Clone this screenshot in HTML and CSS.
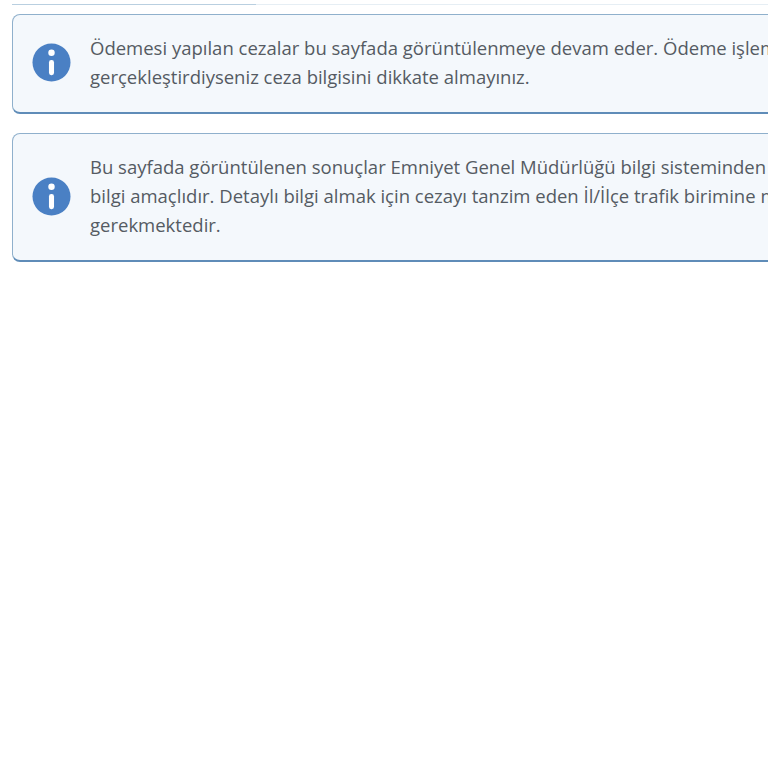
FILE: index.html
```html
<!DOCTYPE html>
<html lang="tr">
<head>
<meta charset="utf-8">
<title>Trafik Cezası</title>
<link rel="stylesheet" href="styles.css">
</head>
<body>
<div class="tabs"><div class="tab-active"></div></div>
<div class="notice">
  <svg class="icon" viewBox="0 0 40 40"><circle cx="20" cy="20" r="19.5" fill="#4a80c4"/><circle cx="20" cy="10" r="3.3" fill="#fff"/><rect x="17.4" y="17.5" width="5.2" height="15.5" rx="2.4" fill="#fff"/></svg>
  <div class="text">
    <p>Ödemesi yapılan cezalar bu sayfada görüntülenmeye devam eder. Ödeme işlemini</p>
    <p>gerçekleştirdiyseniz ceza bilgisini dikkate almayınız.</p>
  </div>
</div>
<div class="notice">
  <svg class="icon" viewBox="0 0 40 40"><circle cx="20" cy="20" r="19.5" fill="#4a80c4"/><circle cx="20" cy="10" r="3.3" fill="#fff"/><rect x="17.4" y="17.5" width="5.2" height="15.5" rx="2.4" fill="#fff"/></svg>
  <div class="text">
    <p>Bu sayfada görüntülenen sonuçlar Emniyet Genel Müdürlüğü bilgi sisteminden alınmakta olup</p>
    <p>bilgi amaçlıdır. Detaylı bilgi almak için cezayı tanzim eden İl/İlçe trafik birimine müracaat edilmesi</p>
    <p>gerekmektedir.</p>
  </div>
</div>
</body>
</html>
```
FILE: styles.css
```css
html, body { margin: 0; padding: 0; overflow: hidden; background: #fff; height: 768px; }
body { font-family: "Open Sans", sans-serif; color: #555b63; }
.tabs { height: 1px; margin: 4px 0 9px 12px; background: #e6eef4; width: 900px; }
.tab-active { height: 1px; width: 244px; background: #b9cfe0; }
.notice {
  display: flex; align-items: center; box-sizing: border-box;
  width: 1000px; margin: 0 0 19px 12px;
  padding: 18px 19px 20px 19px; gap: 19px;
  background: #f4f8fc;
  border: 1px solid #8fb0cc; border-bottom: 2px solid #5f8cb8;
  border-radius: 8px;
}
.icon { width: 39px; height: 39px; flex: none; }
.text { font-size: 18.5px; line-height: 29px; margin-bottom: 1px; }
.text p { margin: 0; white-space: nowrap; }
```
